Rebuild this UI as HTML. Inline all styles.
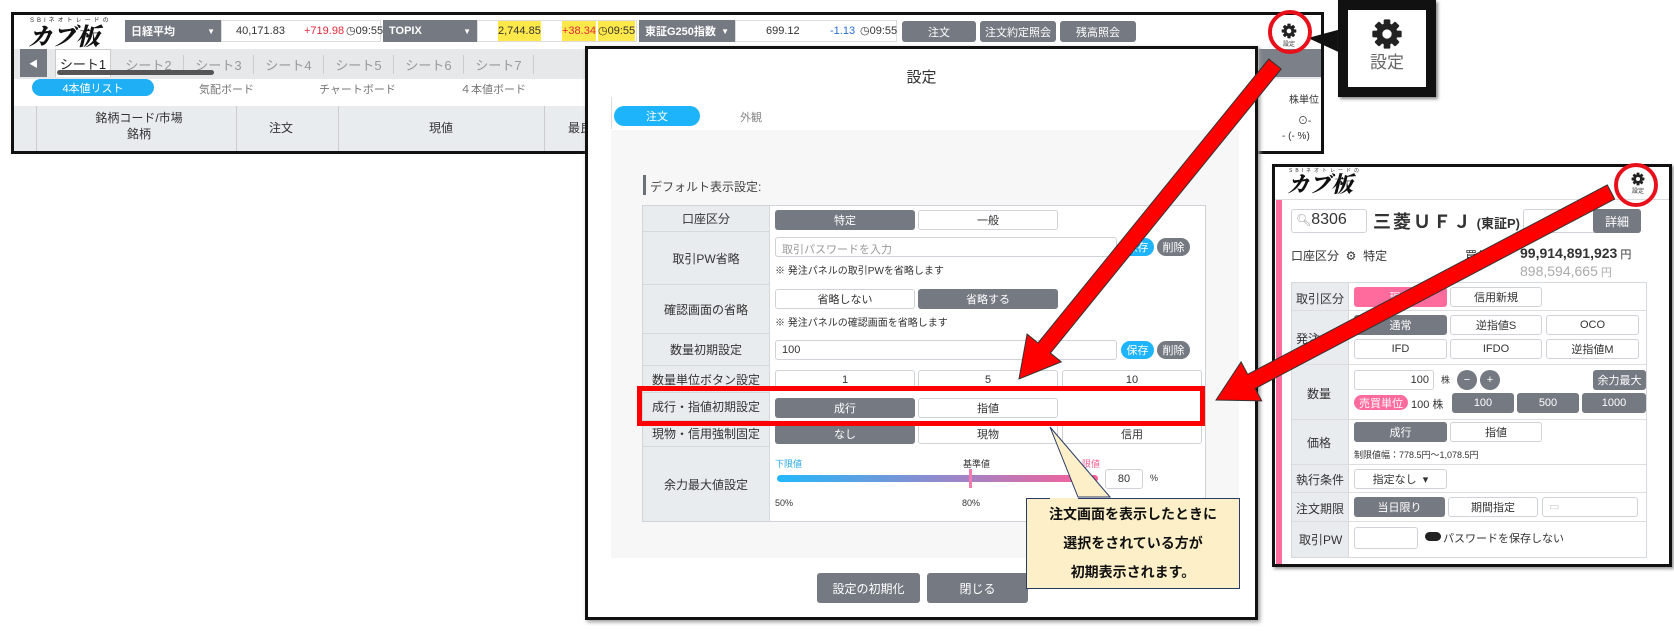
<!DOCTYPE html>
<html><head><meta charset="utf-8"><style>
*{box-sizing:border-box;margin:0;padding:0}
body{width:1674px;height:631px;background:#fff;position:relative;overflow:hidden;font-family:"Liberation Sans","Noto Sans CJK JP",sans-serif;color:#333;font-size:11px}
.a{position:absolute}
.c{display:flex;align-items:center;justify-content:center}
.dk{background:#747982;color:#fff;border-radius:3px}
.wb{background:#fff;border:1px solid #cfd3d7;border-radius:3px}
.lab{background:#e9ecef;border-right:1px solid #d5d8dc}
.logo{font-family:"Noto Serif CJK SC","Liberation Serif",serif;font-weight:900;font-style:italic;color:#111}
</style></head><body>
<svg width="0" height="0" style="position:absolute"><defs><g id="gear"><g fill="#222"><rect x="9.5" y="1" width="5" height="22" rx="1"/><rect x="9.5" y="1" width="5" height="22" rx="1" transform="rotate(45 12 12)"/><rect x="9.5" y="1" width="5" height="22" rx="1" transform="rotate(90 12 12)"/><rect x="9.5" y="1" width="5" height="22" rx="1" transform="rotate(135 12 12)"/><circle cx="12" cy="12" r="8"/></g><circle cx="12" cy="12" r="3.5" fill="#fff"/></g></defs></svg>

<!-- PANEL 1 -->
<div class="a" style="left:11px;top:12px;width:1313px;height:142px;border:3px solid #111;background:#fff;overflow:hidden">
  <div class="a" style="left:16px;top:0px;font-size:6px;letter-spacing:3px">SBIネオトレードの</div>
  <div class="a logo" style="left:14px;top:6px;font-size:24px;line-height:28px">カブ板</div>
  <div class="a dk c" style="left:111px;top:5px;width:96px;height:22px;border-radius:0;justify-content:space-between;padding:0 6px;font-weight:bold">日経平均<span style="font-size:8px">▼</span></div>
  <div class="a" style="left:207px;top:5px;width:160px;height:22px;border:1px solid #ddd;font-size:11px;line-height:20px"><span class="a" style="left:14px">40,171.83</span><span class="a" style="left:82px;color:#e0283c">+719.98</span><span class="a" style="left:124px">◷09:55</span></div>
  <div class="a dk c" style="left:369px;top:5px;width:94px;height:22px;border-radius:0;justify-content:space-between;padding:0 6px;font-weight:bold">TOPIX<span style="font-size:8px">▼</span></div>
  <div class="a" style="left:463px;top:5px;width:160px;height:22px;border:1px solid #ddd;line-height:20px"><span class="a" style="left:20px;background:#ffe94a">2,744.85</span><span class="a" style="left:84px;color:#e0283c;background:#ffe94a">+38.34</span><span class="a" style="left:120px;background:#ffe94a">◷09:55</span></div>
  <div class="a dk c" style="left:625px;top:5px;width:96px;height:22px;border-radius:0;justify-content:space-between;padding:0 6px;font-weight:bold">東証G250指数<span style="font-size:8px">▼</span></div>
  <div class="a" style="left:721px;top:5px;width:162px;height:22px;border:1px solid #ddd;line-height:20px"><span class="a" style="left:30px">699.12</span><span class="a" style="left:94px;color:#2a6fd6">-1.13</span><span class="a" style="left:124px">◷09:55</span></div>
  <div class="a dk c" style="left:888px;top:6px;width:74px;height:21px">注文</div>
  <div class="a dk c" style="left:966px;top:6px;width:76px;height:21px">注文約定照会</div>
  <div class="a dk c" style="left:1046px;top:6px;width:76px;height:21px">残高照会</div>
  <div class="a" style="left:1262px;top:8px;width:26px;text-align:center;font-size:6px;line-height:7px"><svg width="16" height="16" viewBox="0 0 24 24"><use href="#gear"/></svg><br>設定</div>
  <div class="a" style="left:0;top:34px;width:1310px;height:30px;background:#e6e8ea"></div>
  <div class="a dk c" style="left:6px;top:34px;width:27px;height:28px;border-radius:0;font-size:9px">◀</div>
  <div class="a c" style="left:41px;top:34px;width:56px;height:28px;background:#fff;border:1px solid #ccc;border-bottom:none;font-size:13px;color:#222">シート1</div>
  <div class="a" style="left:100px;top:40px;width:480px;font-size:13px;color:#999">
    <span style="display:inline-block;width:70px;text-align:center;border-right:1px solid #ccc">シート2</span><span style="display:inline-block;width:70px;text-align:center;border-right:1px solid #ccc">シート3</span><span style="display:inline-block;width:70px;text-align:center;border-right:1px solid #ccc">シート4</span><span style="display:inline-block;width:70px;text-align:center;border-right:1px solid #ccc">シート5</span><span style="display:inline-block;width:70px;text-align:center;border-right:1px solid #ccc">シート6</span><span style="display:inline-block;width:70px;text-align:center;border-right:1px solid #ccc">シート7</span></div>
  <div class="a" style="left:43px;top:55px;width:157px;height:5px;border-radius:3px;background:#555"></div>
  <div class="a" style="left:1245px;top:34px;width:65px;height:28px;background:#7b8089"></div>
  <div class="a c" style="left:18px;top:64px;width:122px;height:17px;border-radius:9px;background:#1eaff5;color:#fff">4本値リスト</div>
  <div class="a" style="left:185px;top:66px;color:#777">気配ボード</div>
  <div class="a" style="left:305px;top:66px;color:#777">チャートボード</div>
  <div class="a" style="left:446px;top:66px;color:#777">４本値ボード</div>
  <div class="a" style="left:1275px;top:76px;font-size:10px">株単位</div>
  <div class="a" style="left:1284px;top:97px;font-size:10px">⊙-</div>
  <div class="a" style="left:1268px;top:116px;font-size:10px">- (- %)</div>
  <div class="a" style="left:0;top:91px;width:1240px;height:48px;background:#e9ecef"></div>
  <div class="a" style="left:22px;top:91px;width:1px;height:48px;background:#ccc"></div>
  <div class="a" style="left:222px;top:91px;width:1px;height:48px;background:#ccc"></div>
  <div class="a" style="left:324px;top:91px;width:1px;height:48px;background:#ccc"></div>
  <div class="a" style="left:530px;top:91px;width:1px;height:48px;background:#ccc"></div>
  <div class="a" style="left:60px;top:95px;width:130px;text-align:center;font-size:12px;line-height:16px">銘柄コード/市場<br>銘柄</div>
  <div class="a" style="left:255px;top:104px;font-size:12px">注文</div>
  <div class="a" style="left:415px;top:104px;font-size:12px">現値</div>
  <div class="a" style="left:554px;top:104px;font-size:12px">最良</div>
</div>

<!-- zoom gear box -->
<svg class="a" style="left:1300px;top:0" width="60" height="70"><polygon points="8,38 45,28 45,55" fill="#111"/></svg>
<div class="a" style="left:1338px;top:0;width:98px;height:97px;border:10px solid #111;background:#fff;box-shadow:2px 2px 3px #888;text-align:center">
<svg style="margin-top:8px" width="32" height="32" viewBox="0 0 24 24"><use href="#gear"/></svg>
<div style="font-size:17px;line-height:20px;color:#666">設定</div></div>
<div class="a" style="left:1268px;top:10px;width:44px;height:44px;border:4px solid #e8101a;border-radius:50%"></div>

<!-- MODAL -->
<div class="a" style="left:585px;top:46px;width:673px;height:574px;border:3px solid #111;background:#fff;box-shadow:2px 2px 4px #999">
  <div class="a" style="left:0;top:17px;width:667px;text-align:center;font-size:15px">設定</div>
  <div class="a" style="left:23px;top:48px;width:1px;height:32px;background:#ddd"></div>
  <div class="a c" style="left:26px;top:57px;width:86px;height:20px;border-radius:10px;background:#1eb4fb;color:#fff">注文</div>
  <div class="a" style="left:152px;top:60px;color:#888">外観</div>
  <div class="a" style="left:23px;top:81px;width:628px;height:428px;background:#f7f7f7"></div>
  <div class="a" style="left:55px;top:126px;width:3px;height:20px;background:#6c7178"></div>
  <div class="a" style="left:62px;top:129px;font-size:12px;color:#444">デフォルト表示設定:</div>
  <div class="a" style="left:54px;top:156px;width:564px;height:317px;border:1px solid #d0d4d8;background:#fff"></div>
  <div class="a lab c" style="left:55px;top:157px;width:127px;height:26px;border-bottom:1px solid #d5d8dc;font-size:12px">口座区分</div>
  <div class="a dk c" style="left:187px;top:161px;width:140px;height:20px">特定</div>
  <div class="a wb c" style="left:330px;top:161px;width:140px;height:20px">一般</div>
  <div class="a lab c" style="left:55px;top:183px;width:127px;height:53px;border-bottom:1px solid #d5d8dc;font-size:12px">取引PW省略</div>
  <div class="a wb" style="left:187px;top:188px;width:342px;height:20px;color:#999;padding:3px 6px">取引パスワードを入力</div>
  <div class="a c" style="left:533px;top:189px;width:33px;height:18px;border-radius:9px;background:#1eb4fb;color:#fff">保存</div>
  <div class="a c" style="left:569px;top:189px;width:33px;height:18px;border-radius:9px;background:#747982;color:#fff">削除</div>
  <div class="a" style="left:187px;top:213px;font-size:10px">※ 発注パネルの取引PWを省略します</div>
  <div class="a lab c" style="left:55px;top:236px;width:127px;height:49px;border-bottom:1px solid #d5d8dc;font-size:12px">確認画面の省略</div>
  <div class="a wb c" style="left:187px;top:240px;width:140px;height:20px">省略しない</div>
  <div class="a dk c" style="left:330px;top:240px;width:140px;height:20px">省略する</div>
  <div class="a" style="left:187px;top:265px;font-size:10px">※ 発注パネルの確認画面を省略します</div>
  <div class="a lab c" style="left:55px;top:285px;width:127px;height:32px;border-bottom:1px solid #d5d8dc;font-size:12px">数量初期設定</div>
  <div class="a wb" style="left:187px;top:291px;width:342px;height:20px;padding:3px 6px">100</div>
  <div class="a c" style="left:533px;top:292px;width:33px;height:18px;border-radius:9px;background:#1eb4fb;color:#fff">保存</div>
  <div class="a c" style="left:569px;top:292px;width:33px;height:18px;border-radius:9px;background:#747982;color:#fff">削除</div>
  <div class="a lab c" style="left:55px;top:317px;width:127px;height:27px;border-bottom:1px solid #d5d8dc;font-size:12px">数量単位ボタン設定</div>
  <div class="a wb c" style="left:187px;top:321px;width:140px;height:20px">1</div>
  <div class="a wb c" style="left:330px;top:321px;width:140px;height:20px">5</div>
  <div class="a wb c" style="left:474px;top:321px;width:140px;height:20px">10</div>
  <div class="a lab c" style="left:55px;top:344px;width:127px;height:28px;border-bottom:1px solid #d5d8dc;font-size:12px">成行・指値初期設定</div>
  <div class="a dk c" style="left:187px;top:349px;width:140px;height:20px">成行</div>
  <div class="a wb c" style="left:330px;top:349px;width:140px;height:20px">指値</div>
  <div class="a lab c" style="left:55px;top:372px;width:127px;height:26px;border-bottom:1px solid #d5d8dc;font-size:12px">現物・信用強制固定</div>
  <div class="a dk c" style="left:187px;top:375px;width:140px;height:20px">なし</div>
  <div class="a wb c" style="left:330px;top:375px;width:140px;height:20px">現物</div>
  <div class="a wb c" style="left:474px;top:375px;width:140px;height:20px">信用</div>
  <div class="a lab c" style="left:55px;top:398px;width:127px;height:74px;font-size:12px">余力最大値設定</div>
  <div class="a" style="left:187px;top:408px;font-size:9px;color:#29a8e8">下限値</div>
  <div class="a" style="left:375px;top:408px;font-size:9px">基準値</div>
  <div class="a" style="left:485px;top:408px;font-size:9px;color:#f06292">上限値</div>
  <div class="a" style="left:189px;top:426px;width:321px;height:7px;border-radius:4px;background:linear-gradient(90deg,#22b8fb,#9a86c8 55%,#ff5e96)"></div>
  <div class="a" style="left:381px;top:420px;width:3px;height:19px;background:#f47ab0"></div>
  <div class="a wb c" style="left:517px;top:420px;width:38px;height:20px">80</div>
  <div class="a" style="left:562px;top:424px;font-size:9px">%</div>
  <div class="a" style="left:187px;top:449px;font-size:9px">50%</div>
  <div class="a" style="left:374px;top:449px;font-size:9px">80%</div>
  <div class="a dk c" style="left:229px;top:524px;width:103px;height:30px;font-size:12px">設定の初期化</div>
  <div class="a dk c" style="left:339px;top:524px;width:101px;height:30px;font-size:12px">閉じる</div>
</div>
<div class="a" style="left:637px;top:386px;width:568px;height:40px;border:5px solid #f00"></div>
<svg class="a" style="left:1040px;top:425px" width="80" height="80"><polygon points="10,2 38,72 70,72" fill="#fdf0c8" stroke="#2a3b66" stroke-width="1"/></svg>
<div class="a c" style="left:1026px;top:498px;width:214px;height:91px;background:#fdf0c8;border:1px solid #2a3b66;border-top:none;font-size:14px;font-weight:bold;text-align:center;line-height:29px;color:#111"><div>注文画面を表示したときに<br>選択をされている方が<br>初期表示されます。</div></div>
<div class="a" style="left:1078px;top:498px;width:162px;height:1px;background:#2a3b66"></div>
<div class="a" style="left:1026px;top:498px;width:24px;height:1px;background:#2a3b66"></div>

<!-- PANEL 3 -->
<div class="a" style="left:1272px;top:164px;width:400px;height:403px;border:3px solid #111;background:#fff;box-shadow:2px 2px 3px #999">
  <div class="a" style="left:14px;top:0;font-size:5px;letter-spacing:3px">SBIネオトレードの</div>
  <div class="a logo" style="left:12px;top:4px;font-size:22px;line-height:26px">カブ板</div>
  <div class="a" style="left:350px;top:5px;width:26px;text-align:center;font-size:6px;line-height:7px"><svg width="14" height="14" viewBox="0 0 24 24"><use href="#gear"/></svg><br>設定</div>
  <div class="a" style="left:0;top:32px;width:394px;height:1px;background:#ddd"></div>
  <div class="a" style="left:1px;top:33px;width:6px;height:364px;background:#ff6b9d"></div>
  <div class="a wb" style="left:16px;top:42px;width:76px;height:24px;font-size:16px;padding:1px 4px"><span style="color:#999;font-size:12px">🔍︎</span>8306</div>
  <div class="a" style="left:98px;top:41px;font-size:18px;font-weight:bold;letter-spacing:2px">三菱ＵＦＪ<span style="font-size:13px;letter-spacing:0"> (東証P)</span></div>
  <div class="a wb" style="left:248px;top:42px;width:98px;height:24px"></div>
  <div class="a dk c" style="left:318px;top:42px;width:48px;height:24px;font-size:12px">詳細</div>
  <div class="a" style="left:16px;top:80px;font-size:12px">口座区分 &nbsp;⚙ &nbsp;特定</div>
  <div class="a" style="left:190px;top:80px;font-size:12px">買付可</div>
  <div class="a" style="left:245px;top:78px;font-size:14px;font-weight:bold">99,914,891,923<span style="font-weight:normal;font-size:11px"> 円</span></div>
  <div class="a" style="left:245px;top:96px;font-size:14px;color:#aaa">898,594,665<span style="font-size:11px"> 円</span></div>
  <div class="a" style="left:16px;top:115px;width:356px;height:276px;border:1px solid #d5d8dc"></div>
  <div class="a lab" style="left:17px;top:116px;width:57px;height:274px"></div>
  <div class="a" style="left:17px;top:143px;width:354px;height:1px;background:#ddd"></div>
  <div class="a" style="left:17px;top:197px;width:354px;height:1px;background:#ddd"></div>
  <div class="a" style="left:17px;top:252px;width:354px;height:1px;background:#ddd"></div>
  <div class="a" style="left:17px;top:297px;width:354px;height:1px;background:#ddd"></div>
  <div class="a" style="left:17px;top:325px;width:354px;height:1px;background:#ddd"></div>
  <div class="a" style="left:17px;top:354px;width:354px;height:1px;background:#ddd"></div>
  <div class="a" style="left:21px;top:123px;font-size:12px">取引区分</div>
  <div class="a" style="left:21px;top:163px;font-size:12px">発注</div>
  <div class="a" style="left:32px;top:218px;font-size:12px">数量</div>
  <div class="a" style="left:32px;top:267px;font-size:12px">価格</div>
  <div class="a" style="left:21px;top:304px;font-size:12px">執行条件</div>
  <div class="a" style="left:21px;top:333px;font-size:12px">注文期限</div>
  <div class="a" style="left:24px;top:364px;font-size:12px">取引PW</div>
  <div class="a c" style="left:79px;top:120px;width:93px;height:20px;background:#ff6b9d;color:#fff;border-radius:3px">現物</div>
  <div class="a wb c" style="left:175px;top:120px;width:92px;height:20px">信用新規</div>
  <div class="a dk c" style="left:79px;top:148px;width:93px;height:20px">通常</div>
  <div class="a wb c" style="left:175px;top:148px;width:92px;height:20px">逆指値S</div>
  <div class="a wb c" style="left:271px;top:148px;width:93px;height:20px">OCO</div>
  <div class="a wb c" style="left:79px;top:172px;width:93px;height:20px">IFD</div>
  <div class="a wb c" style="left:175px;top:172px;width:92px;height:20px">IFDO</div>
  <div class="a wb c" style="left:271px;top:172px;width:93px;height:20px">逆指値M</div>
  <div class="a wb" style="left:79px;top:203px;width:80px;height:20px;text-align:right;padding:3px 4px">100</div>
  <div class="a" style="left:166px;top:206px;font-size:9px">株</div>
  <div class="a c" style="left:182px;top:203px;width:20px;height:20px;border-radius:50%;background:#747982;color:#fff">−</div>
  <div class="a c" style="left:205px;top:203px;width:20px;height:20px;border-radius:50%;background:#747982;color:#fff">+</div>
  <div class="a dk c" style="left:318px;top:203px;width:53px;height:20px">余力最大</div>
  <div class="a c" style="left:79px;top:228px;width:54px;height:15px;border-radius:8px;background:#ff6b9d;color:#fff">売買単位</div>
  <div class="a" style="left:136px;top:229px">100 株</div>
  <div class="a dk c" style="left:177px;top:226px;width:62px;height:20px">100</div>
  <div class="a dk c" style="left:242px;top:226px;width:62px;height:20px">500</div>
  <div class="a dk c" style="left:307px;top:226px;width:64px;height:20px">1000</div>
  <div class="a dk c" style="left:79px;top:255px;width:93px;height:20px">成行</div>
  <div class="a wb c" style="left:175px;top:255px;width:92px;height:20px">指値</div>
  <div class="a" style="left:79px;top:281px;font-size:9px">制限値幅：778.5円〜1,078.5円</div>
  <div class="a wb c" style="left:79px;top:302px;width:93px;height:20px">指定なし &nbsp;▾</div>
  <div class="a dk c" style="left:79px;top:330px;width:91px;height:20px">当日限り</div>
  <div class="a wb c" style="left:173px;top:330px;width:90px;height:20px">期間指定</div>
  <div class="a wb" style="left:267px;top:330px;width:96px;height:20px;color:#ccc;padding:2px 6px">▭</div>
  <div class="a wb" style="left:79px;top:360px;width:64px;height:22px"></div>
  <div class="a" style="left:150px;top:365px;width:16px;height:9px;border-radius:5px;background:#222"></div>
  <div class="a" style="left:168px;top:363px">パスワードを保存しない</div>
</div>
<div class="a" style="left:1614px;top:163px;width:44px;height:44px;border:4px solid #e8101a;border-radius:50%"></div>

<svg class="a" style="left:0;top:0" width="1674" height="631">
<polygon points="1281.2,69 1050.4,353 1061.3,361.9 1019,379 1027.1,334.1 1038,343 1268.8,59" fill="#f00" stroke="#333" stroke-width="1"/>
<polygon points="1614.7,199.1 1255.1,388.5 1261.7,400.9 1216,400 1241.1,361.9 1247.7,374.3 1607.3,184.9" fill="#f00" stroke="#333" stroke-width="1"/>
</svg>
</body></html>
